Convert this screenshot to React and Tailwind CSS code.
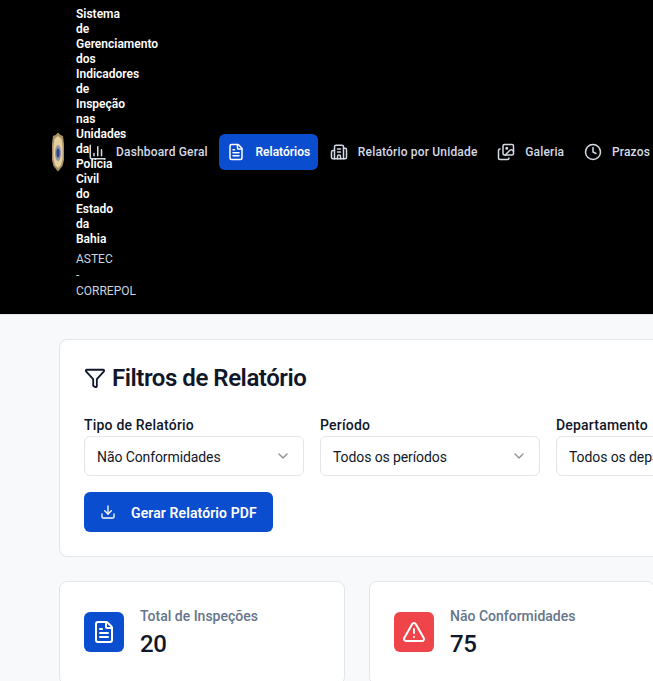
import React from "react";
import { ChartColumn, FileText, Building2, Images, Clock, Funnel, ChevronDown, Download, TriangleAlert } from "lucide-react";

const nav = [
  { label: "Dashboard Geral", Icon: ChartColumn },
  { label: "Relatórios", Icon: FileText, active: true },
  { label: "Relatório por Unidade", Icon: Building2 },
  { label: "Galeria", Icon: Images },
  { label: "Prazos", Icon: Clock },
];

const Badge = () => (
  <svg width="16" height="40" viewBox="0 0 16 40" className="shrink-0 blur-[0.5px]">
    <path d="M8 0.5 L10.5 3 L13 4 L14 12 L14 28 L12.5 34 L8 39.5 L3.5 34 L2 28 L2 12 L3 4 L5.5 3 Z" fill="#a88f63" />
    <path d="M8 4 L11.5 7 L12.5 14 L12.5 27 L11 33 L8 36 L5 33 L3.5 27 L3.5 14 L4.5 7 Z" fill="#e4cf9e" />
    <ellipse cx="8" cy="21" rx="3" ry="8" fill="#8f96a8" />
    <ellipse cx="8" cy="21" rx="1.6" ry="4.5" fill="#2f4488" />
  </svg>
);

const Select = ({ label, value }) => (
  <div className="w-[220px] shrink-0">
    <label className="block h-5 text-sm font-medium leading-[18px] tracking-[0.2px] text-[#0f1729]">{label}</label>
    <div className="flex h-10 items-center justify-between rounded-md border border-[#e2e5e9] bg-white pl-3 pr-3 text-sm tracking-[-0.1px] text-[#0f1729]">
      <span className="truncate pt-px">{value}</span>
      <ChevronDown className="h-4 w-4 shrink-0 text-[#8a8f98]" />
    </div>
  </div>
);

const Stat = ({ Icon, color, label, value }) => (
  <div className="w-[286px] shrink-0 rounded-lg border border-[#e2e5e9] bg-white p-6">
    <div className="flex items-start gap-4">
      <div className={`mt-[6px] flex h-10 w-10 items-center justify-center rounded-md ${color}`}>
        <Icon className="h-6 w-6 text-white" strokeWidth={2} />
      </div>
      <div>
        <p className="text-sm font-medium leading-5 text-[#65758b]">{label}</p>
        <p className="mt-[2px] text-2xl font-medium leading-8 tracking-[-0.5px] text-[#0f1729]">{value}</p>
      </div>
    </div>
  </div>
);

export default function App() {
  return (
    <div className="h-[681px] w-[653px] overflow-hidden bg-[#f8f9fb] font-['Roboto',sans-serif]">
      <header className="flex h-[315px] items-center border-b border-[#e2e5e9] bg-black pb-[17px] pl-[50px] pt-[6px]">
        <div className="flex w-[30px] shrink-0 items-center gap-[10px]">
          <Badge />
          <div className="mt-[2px] w-[1px] shrink-0">
            <h1 className="text-xs font-semibold leading-[15px] text-white">
              Sistema de Gerenciamento dos Indicadores de Inspeção nas Unidades da Polícia Civil do Estado da Bahia
            </h1>
            <p className="mt-1 text-xs leading-4 text-[#cbd5e1]">ASTEC - CORREPOL</p>
          </div>
        </div>
        <nav className="flex shrink-0 items-center gap-[3.7px]">
          {nav.map(({ label, Icon, active }) => (
            <div
              key={label}
              className={`flex h-9 items-center gap-[10px] rounded-md px-2 text-xs whitespace-nowrap ${active ? "bg-[#0b4dcf] font-semibold text-white" : "font-medium tracking-[0.17px] text-[#d5dbe5]"}`}
            >
              <Icon className="h-[18px] w-[18px] shrink-0" />
              <span className="pt-px">{label}</span>
            </div>
          ))}
        </nav>
      </header>
      <main className="w-[1100px] pl-[59px] pt-6">
        <section className="rounded-lg border border-[#e2e5e9] bg-white p-6">
          <h2 className="flex h-7 items-center gap-[6px] text-2xl font-semibold tracking-[-0.45px] text-[#0f1729]">
            <Funnel className="h-[22px] w-[22px]" />
            Filtros de Relatório
          </h2>
          <div className="mt-6 flex gap-4">
            <Select label="Tipo de Relatório" value="Não Conformidades" />
            <Select label="Período" value="Todos os períodos" />
            <Select label="Departamento" value="Todos os departamentos" />
          </div>
          <div className="mt-4 flex h-10 w-[189px] items-center gap-[15px] whitespace-nowrap rounded-md bg-[#0b4dcf] px-4 text-sm font-semibold tracking-[0.1px] text-white">
            <Download className="h-4 w-4 shrink-0" />
            <span className="pt-px">Gerar Relatório PDF</span>
          </div>
        </section>
        <div className="mt-6 flex gap-6">
          <Stat Icon={FileText} color="bg-[#0b4dcf]" label="Total de Inspeções" value="20" />
          <Stat Icon={TriangleAlert} color="bg-[#ef444a]" label="Não Conformidades" value="75" />
        </div>
      </main>
    </div>
  );
}
